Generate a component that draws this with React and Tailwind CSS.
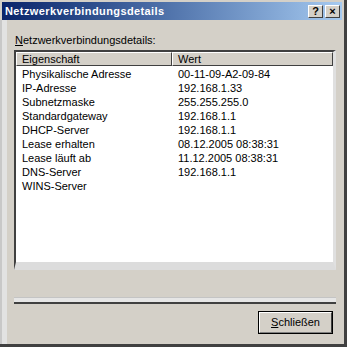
import React from 'react';

const rows = [
  ['Physikalische Adresse', '00-11-09-A2-09-84'],
  ['IP-Adresse', '192.168.1.33'],
  ['Subnetzmaske', '255.255.255.0'],
  ['Standardgateway', '192.168.1.1'],
  ['DHCP-Server', '192.168.1.1'],
  ['Lease erhalten', '08.12.2005 08:38:31'],
  ['Lease läuft ab', '11.12.2005 08:38:31'],
  ['DNS-Server', '192.168.1.1'],
  ['WINS-Server', ''],
];

function TitleButton({ children }) {
  return (
    <div className="w-[15px] h-[13px] bg-[#d4d0c8] border border-t-white border-l-white border-r-[#404040] border-b-[#404040] flex items-center justify-center text-[11px] font-bold leading-none text-black">
      {children}
    </div>
  );
}

function HeaderCell({ label, className }) {
  return (
    <div
      className={`h-[14px] bg-[#d4d0c8] border border-t-white border-l-white border-r-[#404040] border-b-[#404040] pl-[5px] flex items-center text-[11px] leading-none ${className}`}
    >
      {label}
    </div>
  );
}

export default function App() {
  return (
    <div className="w-[347px] h-[347px] bg-[#d4d0c8] flex flex-col border-r-[3px] border-b-[3px] border-r-[#404040] border-b-[#404040] font-['Liberation_Sans',Arial,sans-serif] text-black overflow-hidden">
      {/* Title bar */}
      <div className="mx-[2px] mt-[2px] h-[18px] bg-gradient-to-r from-[#0a246a] to-[#a6caf0] flex items-center pl-[3px] pr-[2px]">
        <span className="text-white font-bold text-[11px] tracking-[0.4px] flex-1">Netzwerkverbindungsdetails</span>
        <div className="flex gap-[2px]">
          <TitleButton>?</TitleButton>
          <TitleButton>×</TitleButton>
        </div>
      </div>

      <div className="flex flex-1">
        {/* left edge strip */}
        <div className="w-[7px] bg-[#e2e2e2] border-l-2 border-[#c8c8c8]" />

        <div className="flex-1 flex flex-col pl-[7px] pr-[8px]">
          <div className="mt-[12px] h-[16px] flex items-center pl-[1px] text-[11px]">
            <span>
              <span className="underline">N</span>etzwerkverbindungsdetails:
            </span>
          </div>

          {/* List */}
          <div className="mt-[2px] h-[220px] flex flex-col border-t-2 border-l-2 border-t-[#404040] border-l-[#404040] border-r-[3px] border-b-[8px] border-r-[#e0e0e0] border-b-[#dcdcdc] bg-white">
            <div className="flex">
              <HeaderCell label="Eigenschaft" className="w-[156px]" />
              <HeaderCell label="Wert" className="flex-1" />
            </div>
            <div className="pt-[1px]">
              {rows.map(([name, value]) => (
                <div key={name} className="h-[14px] flex items-center text-[11px] leading-none">
                  <span className="w-[156px] pl-[6px]">{name}</span>
                  <span className="pl-[6px]">{value}</span>
                </div>
              ))}
            </div>
          </div>

          {/* separator */}
          <div className="mt-[27px] h-[7px] bg-[#e6e6e6] border-t border-[#c4c4c4] border-b-2 border-b-[#404040]" />

          {/* button */}
          <div className="mt-[7px] flex justify-end pr-[3px]">
            <button className="w-[75px] h-[23px] border border-black bg-[#d4d0c8] flex">
              <div className="flex-1 border border-t-white border-l-white border-r-[#404040] border-b-[#808080] flex items-center justify-center text-[11px]">
                <span>
                  <span className="underline">S</span>chließen
                </span>
              </div>
            </button>
          </div>
        </div>
      </div>
    </div>
  );
}
